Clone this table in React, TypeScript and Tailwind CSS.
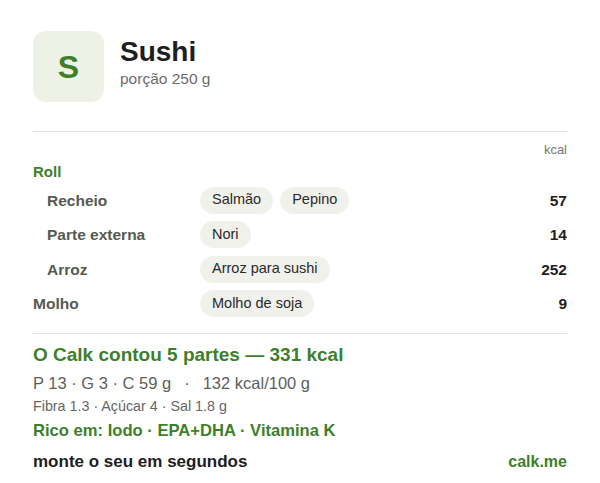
import React from "react";

type Row = { label: string; sub?: boolean; items: string[]; kcal: number };

const ROWS: Row[] = [
  { label: "Recheio", sub: true, items: ["Salmão", "Pepino"], kcal: 57 },
  { label: "Parte externa", sub: true, items: ["Nori"], kcal: 14 },
  { label: "Arroz", sub: true, items: ["Arroz para sushi"], kcal: 252 },
  { label: "Molho", items: ["Molho de soja"], kcal: 9 },
];

function PartRow({ row }: { row: Row }) {
  return (
    <div className="flex items-center h-[34.5px]">
      <div
        className={`w-[167px] shrink-0 text-[15.5px] font-bold text-[#555a52] ${row.sub ? "pl-[14px]" : ""}`}
      >
        {row.label}
      </div>
      <div className="flex-1 flex gap-[7px]">
        {row.items.map((it) => (
          <span
            key={it}
            className="h-[27px] px-[12px] flex items-center rounded-full bg-[#f1f1ec] text-[14.5px] text-[#2a2a2a]"
          >
            {it}
          </span>
        ))}
      </div>
      <div className="text-[15.5px] font-bold text-[#1f1f1f]">{row.kcal}</div>
    </div>
  );
}

export default function App() {
  return (
    <div
      className="min-h-screen bg-white px-[33px] pt-[31px] text-[#222]"
      style={{ fontFamily: '"Liberation Sans", Arial, sans-serif' }}
    >
      {/* header */}
      <div className="flex gap-[16px] items-start">
        <div className="w-[71px] h-[71px] rounded-[13px] bg-[#eef1e6] flex items-center justify-center text-[32px] font-bold text-[#3d7f2b]">
          S
        </div>
        <div className="pt-[4px]">
          <h1 className="text-[28px] leading-[34px] font-bold text-[#1e1e1e]">Sushi</h1>
          <p className="text-[15.5px] leading-[20px] text-[#6b6b6b]">porção 250 g</p>
        </div>
      </div>

      <div className="mt-[29px] border-t border-[#e4e4e4]" />

      <div className="pt-[11px] text-right text-[13px] leading-[14px] text-[#777]">kcal</div>
      <div className="mt-[5px] h-[20px] leading-[20px] text-[15px] font-bold text-[#3d7f2b]">Roll</div>
      <div className="mt-[1px]">
        {ROWS.map((r) => (
          <PartRow key={r.label} row={r} />
        ))}
      </div>

      <div className="mt-[12px] border-t border-[#e4e4e4]" />

      <div className="pt-[9px]">
        <div className="text-[19px] leading-[24px] font-bold text-[#3d7f2b]">
          O Calk contou 5 partes — 331 kcal
        </div>
        <div className="mt-[5px] text-[16.5px] leading-[22px] text-[#5e5e5e] flex">
          <span>P 13 · G 3 · C 59 g</span>
          <span className="mx-[13px]">·</span>
          <span>132 kcal/100 g</span>
        </div>
        <div className="mt-[3px] text-[14.3px] leading-[18px] text-[#666]">
          Fibra 1.3 · Açúcar 4 · Sal 1.8 g
        </div>
        <div className="mt-[5px] text-[16.6px] leading-[22px] font-bold text-[#3d7f2b]">
          Rico em: Iodo · EPA+DHA · Vitamina K
        </div>
        <div className="mt-[9px] flex justify-between items-center leading-[22px]">
          <span className="text-[17px] font-bold text-[#1e1e1e]">monte o seu em segundos</span>
          <span className="text-[16px] font-bold text-[#3d7f2b]">calk.me</span>
        </div>
      </div>
    </div>
  );
}
